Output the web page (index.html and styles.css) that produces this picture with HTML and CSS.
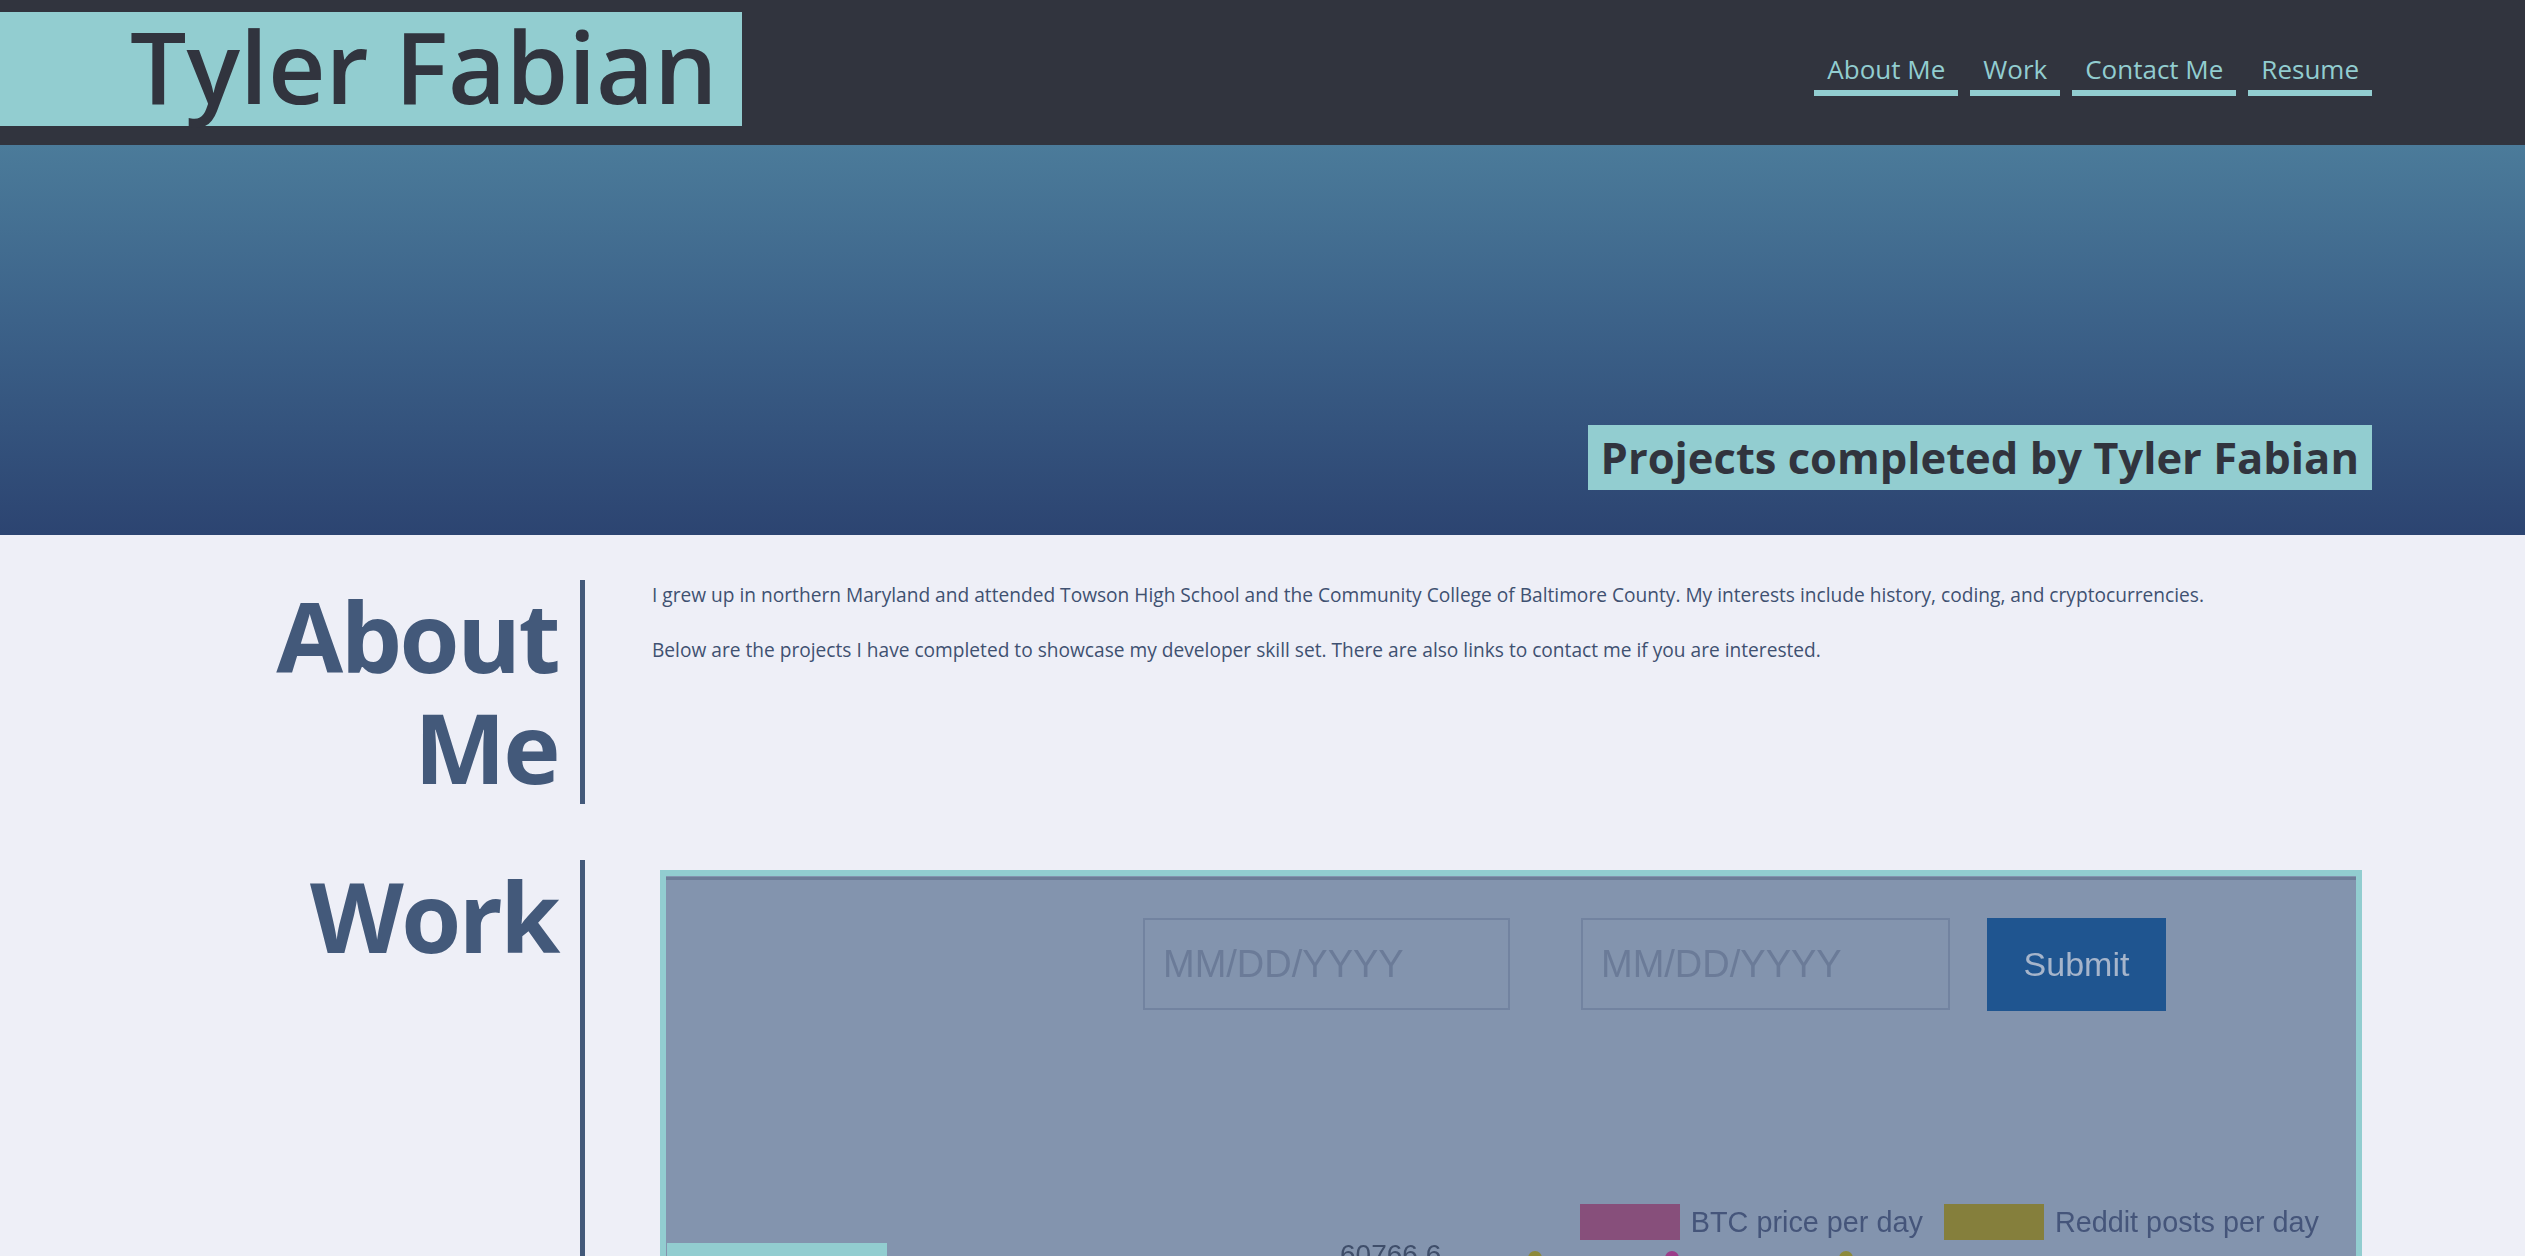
FILE: index.html
```html
<!DOCTYPE html>
<html lang="en">
<head>
<meta charset="utf-8">
<title>Tyler Fabian</title>
<link rel="stylesheet" href="styles.css">
</head>
<body>
<header class="topbar">
  <div class="brand">Tyler Fabian</div>
  <nav class="nav">
    <a class="nav-link" href="#about">About Me</a>
    <a class="nav-link" href="#work">Work</a>
    <a class="nav-link" href="#contact">Contact Me</a>
    <a class="nav-link" href="#resume">Resume</a>
  </nav>
</header>
<section class="hero">
  <h2 class="hero-title">Projects completed by Tyler Fabian</h2>
</section>
<main class="main">
  <section class="section" id="about">
    <h1 class="section-head">About Me</h1>
    <div class="section-body">
      <p class="text first">I grew up in northern Maryland and attended Towson High School and the Community College of Baltimore County. My interests include history, coding, and cryptocurrencies.</p>
      <p class="text">Below are the projects I have completed to showcase my developer skill set. There are also links to contact me if you are interested.</p>
    </div>
  </section>
  <section class="section work" id="work">
    <h1 class="section-head tall">Work</h1>
    <div class="section-body">
      <figure class="shot">
        <div class="shot-inner">
          <div class="shot-topline"></div>
          <div class="shot-form">
            <div class="fake-input">MM/DD/YYYY</div>
            <div class="fake-input second">MM/DD/YYYY</div>
            <div class="fake-button">Submit</div>
          </div>
          <div class="legend">
            <span class="swatch pink"></span><span class="legend-text">BTC price per day</span>
            <span class="swatch olive"></span><span class="legend-text">Reddit posts per day</span>
          </div>
          <div class="chart-row">
            <div class="caption-box"></div>
            <span class="axis-label">60766.6</span>
            <span class="dot olive-dot d1"></span>
            <span class="dot pink-dot d2"></span>
            <span class="dot olive-dot d3"></span>
          </div>
        </div>
      </figure>
    </div>
  </section>
</main>
</body>
</html>
```

FILE: styles.css
```css
* { box-sizing: border-box; }
html, body { margin: 0; padding: 0; }
body {
  background: #eeeff7;
  font-family: "Open Sans", "DejaVu Sans", sans-serif;
  overflow: hidden;
  height: 1256px;
}

.topbar {
  background: #31343e;
  height: 145px;
  display: flex;
  justify-content: space-between;
  align-items: flex-start;
}
.brand {
  margin-top: 12px;
  background: #92cdd0;
  color: #31343e;
  font-size: 100px;
  font-weight: 600;
  line-height: 107px;
  height: 114px;
  padding: 0 24px 7px 130px;
  white-space: nowrap;
}
.nav {
  display: flex;
  gap: 12px;
  margin: 54px 153px 0 0;
}
.nav-link {
  display: block;
  color: #92cdd0;
  text-decoration: none;
  font-size: 26px;
  line-height: 30px;
  padding: 0 13px 6px;
  border-bottom: 6px solid #92cdd0;
}

.hero {
  height: 390px;
  background: linear-gradient(to bottom, #4b7b9a 0%, #3c6289 45%, #2c4471 100%);
  display: flex;
  justify-content: flex-end;
  align-items: flex-end;
  padding: 0 153px 45px 0;
}
.hero-title {
  margin: 0;
  background: #92cdd0;
  color: #31343e;
  font-size: 43.5px;
  font-weight: 700;
  line-height: 65px;
  height: 65px;
  padding: 0 13px;
  white-space: nowrap;
}

.main { padding-top: 45px; }
.section {
  display: flex;
  margin-right: 163px;
}
.section.work { margin-top: 56px; }
.section-head {
  flex: 0 0 585px;
  margin: 0;
  text-align: right;
  padding: 0 22px 2px 230px;
  border-right: 5px solid #43597a;
  color: #43597a;
  font-size: 97px;
  font-weight: 700;
  letter-spacing: -2.5px;
  line-height: 111px;
}
.section-head.tall { height: 420px; }
.section-body {
  flex: 1;
  padding-left: 67px;
}
.text {
  margin: 0 0 31px;
  color: #3f5171;
  font-size: 19.15px;
  line-height: 24px;
  white-space: nowrap;
}
.text.first { padding-top: 3px; }

.shot {
  margin: 10px 0 0 8px;
  border: 6px solid #92cdd0;
  height: 700px;
  background: #8394ae;
  overflow: hidden;
}
.shot-inner {
  filter: blur(0.7px);
  font-family: "Liberation Sans", Arial, sans-serif;
}
.shot-topline {
  margin-top: 1px;
  height: 3px;
  background: #6d7c97;
}
.shot-form {
  display: flex;
  margin-top: 38px;
  padding-left: 477px;
}
.fake-input {
  width: 367px;
  height: 92px;
  border: 2px solid #7283a0;
  color: #6b7b98;
  font-size: 38px;
  line-height: 88px;
  padding-left: 18px;
}
.fake-input.second {
  width: 369px;
  margin-left: 71px;
}
.fake-button {
  width: 179px;
  height: 93px;
  margin-left: 37px;
  background: #1f5590;
  color: #a6b5cb;
  font-size: 34px;
  line-height: 93px;
  text-align: center;
}
.legend {
  display: flex;
  justify-content: flex-end;
  align-items: center;
  margin-top: 193px;
  padding-right: 37px;
  height: 36px;
}
.swatch {
  width: 100px;
  height: 36px;
  margin-right: 11px;
}
.swatch.pink { background: #874f7b; }
.swatch.olive { background: #857f3c; margin-left: 21px; }
.legend-text {
  color: #45557a;
  font-size: 28.8px;
  line-height: 36px;
}
.chart-row {
  display: flex;
  align-items: flex-start;
  margin-top: 3px;
  height: 60px;
}
.caption-box {
  width: 220px;
  height: 60px;
  margin-left: 1px;
  background: #92cdd0;
}
.axis-label {
  margin: -4px 0 0 453px;
  color: #3f4e6a;
  font-size: 28px;
  line-height: 32px;
}
.dot {
  width: 14px;
  height: 14px;
  border-radius: 50%;
  margin-top: 8px;
}
.olive-dot { background: #8d8a3a; }
.pink-dot { background: #9b3d8a; }
.d1 { margin-left: 87px; }
.d2 { margin-left: 123px; }
.d3 { margin-left: 160px; }
```
